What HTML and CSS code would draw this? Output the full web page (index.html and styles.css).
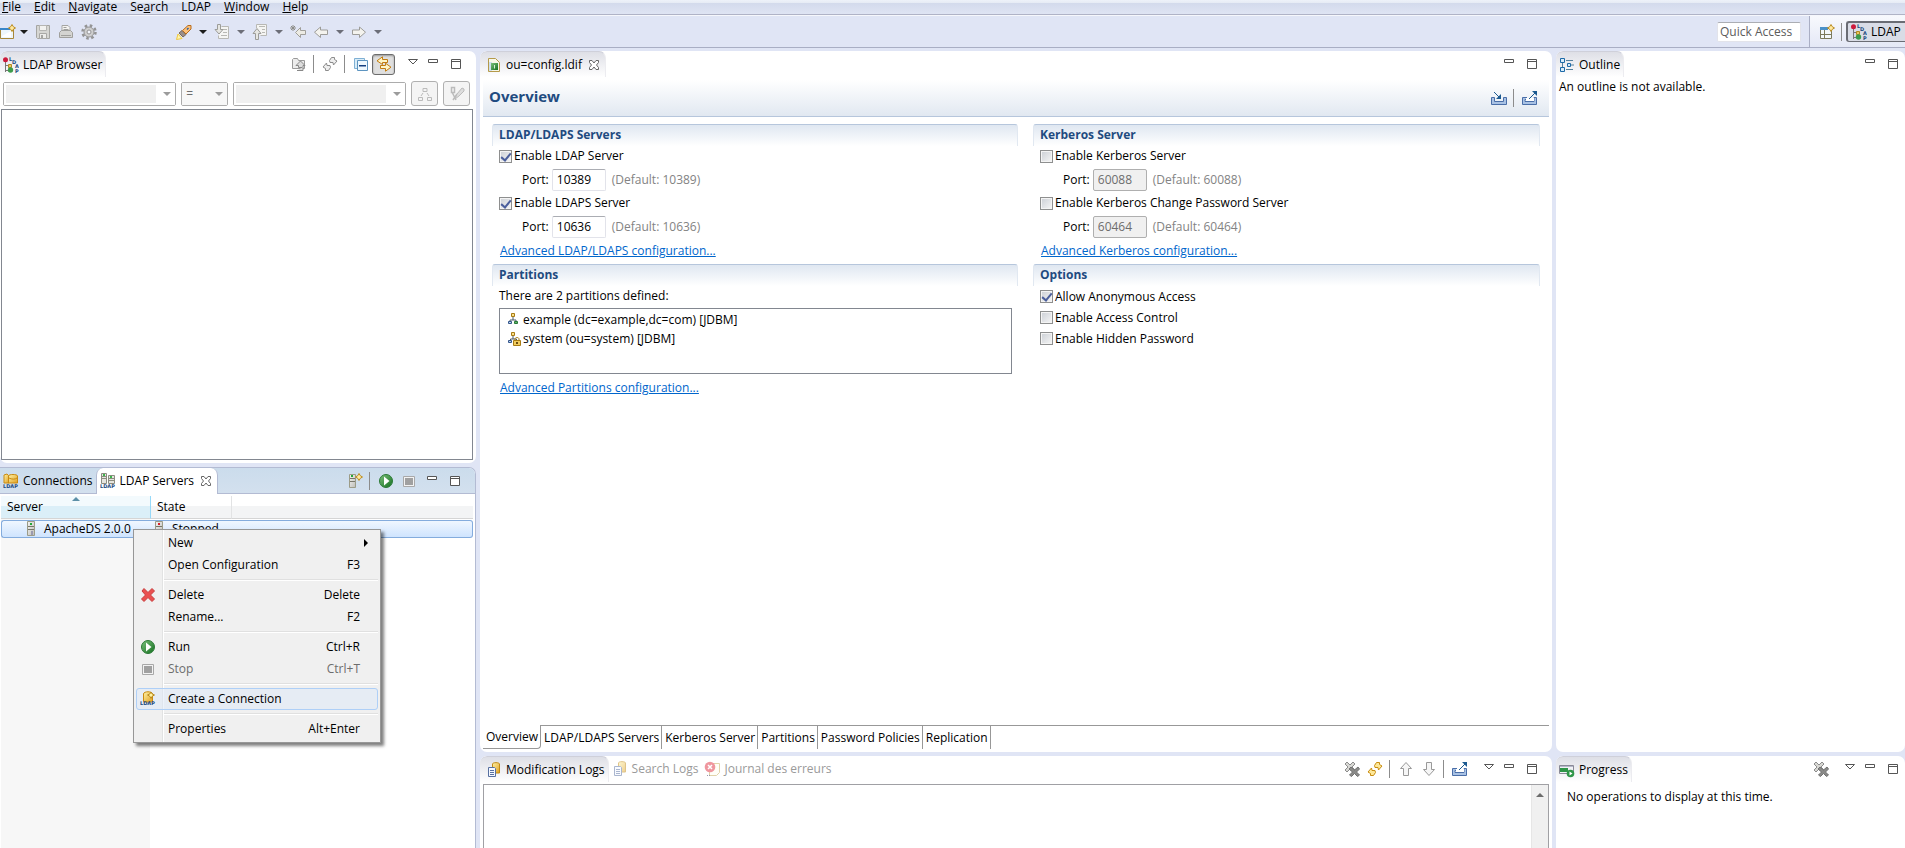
FILE: index.html
```html
<!DOCTYPE html>
<html lang="en">
<head>
  <meta charset="UTF-8">
  <meta name="viewport" content="width=device-width, initial-scale=1.0">
  <title>LDAP - ou=config.ldif</title>
  <link rel="stylesheet" href="styles.css">
</head>
<body>

  <!-- Shared icons -->
  <svg class="sprite" aria-hidden="true">
    <defs>
      <linearGradient id="gGold" x1="0" y1="0" x2="1" y2="1"><stop offset="0" stop-color="#fff3a8"/><stop offset="1" stop-color="#e0a020"/></linearGradient>
      <linearGradient id="gGreen" x1="0" y1="0" x2="1" y2="1"><stop offset="0" stop-color="#7cc07c"/><stop offset="1" stop-color="#14701f"/></linearGradient>
      <linearGradient id="gGrey" x1="0" y1="0" x2="1" y2="1"><stop offset="0" stop-color="#f4f4f2"/><stop offset="1" stop-color="#bdbdb8"/></linearGradient>
    </defs>
    <symbol id="i-new" viewBox="0 0 16 16">
      <path d="M.5 4.5h13v10H.5z" fill="#eef6fc" stroke="#a8873a"/>
      <path d="M0 4h10v2H0z" fill="#3a86c8"/>
      <path d="M2 12l9-5v6H2z" fill="#fff"/>
      <path d="M12 .5l1.3 2.2 2.2 1.3-2.2 1.3L12 7.5l-1.3-2.2L8.5 4l2.2-1.3z" fill="#ffe9a0" stroke="#b98a20"/>
    </symbol>
    <symbol id="i-save" viewBox="0 0 16 16">
      <path d="M1.5 1.5h13v13h-12l-1-1z" fill="#d6d6d3" stroke="#a5a5a2"/>
      <path d="M4.5 1.5h7v5h-7z" fill="#f2f2f0" stroke="#b5b5b2"/>
      <path d="M4.5 9.5h7v5h-7z" fill="#ececea" stroke="#a9a9a6"/><path d="M6 11h2v3H6z" fill="#a5a5a2"/>
    </symbol>
    <symbol id="i-print" viewBox="0 0 16 16">
      <path d="M4 1.5h6l2 2V8H4z" fill="#f4f4f2" stroke="#a5a5a2"/>
      <path d="M1.5 8.5l2-2h9l2 2v5h-13z" fill="#d4d4d1" stroke="#a0a09d"/>
      <path d="M3 11.5h10M5.5 3.5h3M5.5 5.5h5" stroke="#a0a09d"/>
    </symbol>
    <symbol id="i-gear" viewBox="0 0 16 16">
      <circle cx="8" cy="8" r="6.5" fill="none" stroke="#949494" stroke-width="2.5" stroke-dasharray="2.55 2.55"/>
      <circle cx="8" cy="8" r="5" fill="#cfcfcf" stroke="#949494"/>
      <circle cx="8" cy="8" r="2" fill="#f2f4fa" stroke="#949494"/>
    </symbol>
    <symbol id="i-torch" viewBox="0 0 16 16">
      <path d="M.5 15.5L2 10l4 4.500z" fill="#fff6b0" stroke="#f0c840"/>
      <path d="M3 9l3-2.500 4 4L7 13z" fill="#9a8e88" stroke="#77685e"/>
      <path d="M6.500 6.500L12 1.500l3 0v3.500L10 10z" fill="#fbc07a" stroke="#b86c1c"/>
      <path d="M11 5.500l1.500-1.500" stroke="#2a5fa8" stroke-width="1.500"/>
    </symbol>
    <symbol id="i-next" viewBox="0 0 16 16">
      <path d="M7.5 2.5h7v12h-10v-3" fill="#f5f5f3" stroke="#b8b8b4"/>
      <path d="M9 5.5h4M9 8.5h4M7 11.5h6" stroke="#b8b8b4"/>
      <path d="M3.5.5h3v5h2.5L5 10 1 5.5h2.5z" fill="#e6e6e2" stroke="#9c9c98"/>
    </symbol>
    <symbol id="i-prev" viewBox="0 0 16 16">
      <path d="M4.5 4V.5h10v11h-6" fill="#f5f5f3" stroke="#b8b8b4"/>
      <path d="M7 2.5h6M10 5.5h3M10 8.5h3" stroke="#b8b8b4"/>
      <path d="M3.5 15.5h3v-6H9L5 4.5l-4 5h2.5z" fill="#e6e6e2" stroke="#9c9c98"/>
    </symbol>
    <symbol id="i-lastedit" viewBox="0 0 16 16">
      <path d="M15.5 6.5v4h-5v3L5.500 8.5l5-5v3z" fill="#ecebe4" stroke="#a09f9a"/>
      <path d="M3 1v6M0 4h6M1 2l4 4M5 2L1 6" stroke="#8c8c88"/>
    </symbol>
    <symbol id="i-left" viewBox="0 0 16 16"><path d="M14.5 6v4.5H7.5v3L1.5 8.2l6-5.2v3z" fill="#f4f3ee" stroke="#9d9c98"/></symbol>
    <symbol id="i-right" viewBox="0 0 16 16"><path d="M1.5 6v4.5h7v3l6-5.3L8.5 3v3z" fill="#f4f3ee" stroke="#9d9c98"/></symbol>
    <symbol id="i-up" viewBox="0 0 16 16"><path d="M5.5 14.5v-7h-3L8 1.5l5.5 6h-3v7z" fill="#f6f6f6" stroke="#999"/></symbol>
    <symbol id="i-down" viewBox="0 0 16 16"><path d="M5.5 1.5v7h-3L8 14.5l5.5-6h-3v-7z" fill="#f6f6f6" stroke="#999"/></symbol>
    <symbol id="i-persp" viewBox="0 0 16 16">
      <path d="M1.5 4.5h11v10h-11z" fill="#f4f8fb" stroke="#7c7a5c"/>
      <path d="M1 3h8v3H1z" fill="#4a90c8"/><path d="M5.5 6v8M2 10.5h10" stroke="#7c7a5c"/>
      <path d="M12 .5l1.3 2.2 2.2 1.3-2.2 1.3L12 7.5l-1.3-2.2L8.5 4l2.2-1.3z" fill="#ffe9a0" stroke="#b98a20"/>
    </symbol>
    <symbol id="i-ldap" viewBox="0 0 16 16">
      <path d="M2.5 4v11M2.5 8.5h4M2.5 13.5h4" stroke="#777" fill="none"/>
      <circle cx="2.5" cy="2.8" r="2.5" fill="#cc1a3c"/>
      <path d="M5.5 7.5h3v3h-3z" fill="#e8c860" stroke="#b58a1c"/>
      <circle cx="7.5" cy="13" r="2.7" fill="#3d9c4c"/>
      <g class="tiny"><text x="6" y="4">L</text><text x="9" y="7">D</text><text x="12" y="11">A</text><text x="12" y="16">P</text></g>
    </symbol>
    <symbol id="i-folderup" viewBox="0 0 16 16">
      <path d="M1.5 3.5l1-1h4l1 2h6v8h-12z" fill="#ececec" stroke="#999"/>
      <path d="M6 14.5h6v-5h2L9.5 5 5 9.5h2.5v2H11" fill="#ddd" stroke="#888"/>
    </symbol>
    <symbol id="i-refresh" viewBox="0 0 16 16">
      <path d="M7.5 4.500l2-3h3v2l2.500 1.500-3.500 4-.500-2.500h-3z" fill="#eee" stroke="#8c8c8c"/>
      <path d="M8.500 11.500l-2 3h-3v-2L1 11l3.500-4 .500 2.500h3z" fill="#eee" stroke="#8c8c8c"/>
    </symbol>
    <symbol id="i-refreshgold" viewBox="0 0 16 16">
      <path d="M7.5 4.500l2-3h3v2l2.500 1.500-3.500 4-.500-2.500h-3z" fill="#fde89a" stroke="#c88c10"/>
      <path d="M8.500 11.500l-2 3h-3v-2L1 11l3.500-4 .500 2.500h3z" fill="#fde89a" stroke="#c88c10"/>
    </symbol>
    <symbol id="i-collapse" viewBox="0 0 16 16">
      <path d="M1.5 2.5h10v10h-10z" fill="#d8ecf8" stroke="#7fb0d4"/>
      <path d="M4.5 4.5h10v10h-10z" fill="#eef8fe" stroke="#5d94c0"/><path d="M6 9h7v1.500H6z" fill="#143f80"/>
    </symbol>
    <symbol id="i-link" viewBox="0 0 16 16">
      <path d="M11.500 3.500v3h-5v2L1 4.800 6.500.8v2.700z" fill="#fff6c8" stroke="#c27c10"/>
      <path d="M4.500 9.500v3h5v2.700l5.500-4-5.500-4v2.300z" fill="#fff6c8" stroke="#c27c10"/>
    </symbol>
    <symbol id="i-viewmenu" viewBox="0 0 16 16"><path d="M3.5 3.5h9L8 8z" fill="#fff" stroke="#555"/></symbol>
    <symbol id="i-min" viewBox="0 0 16 16"><path d="M3.5 3.5h9v3h-9z" fill="#fff" stroke="#555"/></symbol>
    <symbol id="i-max" viewBox="0 0 16 16"><path d="M3.5 3.5h9v9h-9zM3.5 5.5h9" fill="#fff" stroke="#555"/></symbol>
    <symbol id="i-close" viewBox="0 0 16 16"><path d="M3.5 3.5H6l2 2.5 2-2.5h2.5v2L10.5 8l2 2.5v2H10L8 10l-2 2.5H3.5v-2l2-2.5-2-2.5z" fill="#fff" stroke="#666"/></symbol>
    <symbol id="i-tree" viewBox="0 0 16 16"><path d="M6 2.5h4v3H6zM1.5 11.5h4v3h-4zM10.5 11.5h4v3h-4zM6 7L4 10M10 7l2 3" fill="none" stroke="#bbb"/></symbol>
    <symbol id="i-run-filter" viewBox="0 0 16 16">
      <path d="M2.5 1.5h3v5h-3zM3 6l4 8M8 8l-4 6" fill="none" stroke="#bbb" stroke-width="1.5"/>
      <path d="M6 13l2-5 5-6 2 1v2l-5 5z" fill="#ddd" stroke="#bbb"/>
    </symbol>
    <symbol id="i-ldif" viewBox="0 0 16 16">
      <path d="M2.5 1.5h7l4 4v9h-11z" fill="#f8f8e8" stroke="#b59a4a"/><path d="M3 5h3v9H3z" fill="#cfe0ee"/>
      <path d="M5 6h7v7H5z" fill="url(#gGreen)"/><path d="M8.5 11.5V8" stroke="#d8f0d8"/>
    </symbol>
    <symbol id="i-import" viewBox="0 0 16 16">
      <path d="M.5 7.5h3v4h9v-4h3v7H.5z" fill="#a9c2e4" stroke="#4a6ea8"/>
      <path d="M3 2l6 6" stroke="#1c5a90"/><path d="M10 4v5H5z" fill="#1c5a90"/>
    </symbol>
    <symbol id="i-export" viewBox="0 0 16 16">
      <path d="M5 7.5H.5v7h14v-7H12v4H3v-2h2" fill="#a9c2e4" stroke="#4a6ea8"/>
      <path d="M4 8h8v3H4z" fill="#fff"/>
      <path d="M7 9l6-6" stroke="#1c5a90"/><path d="M10 1h5v5z" fill="#1c5a90"/>
    </symbol>
    <symbol id="i-outline" viewBox="0 0 16 16">
      <path d="M1.5 1.5h4v4h-4zM1.5 10.5h4v4h-4zM8.500 6.5h3v3h-3z" fill="#d8ecfa" stroke="#1d6aa8"/>
      <path d="M7 3.500h7M12 8h3M7 12.5h7M3.500 6v4" stroke="#55809c" fill="none"/>
    </symbol>
    <symbol id="i-conns" viewBox="0 0 16 16">
      <path d="M1 2l3-1 2 2v7H1z" fill="url(#gGold)" stroke="#c98a10"/>
      <path d="M5.5 3c0-2 9-2 9 0v7h-9z" fill="url(#gGold)" stroke="#c98a10"/><path d="M6 5c3 1.500 6 1.500 8 0" fill="none" stroke="#c98a10"/>
      <g class="tiny"><text x="0" y="15">LDAP</text></g>
    </symbol>
    <symbol id="i-servers" viewBox="0 0 16 16">
      <path d="M1.5.5h5v10h-5zM8.500 2.5h6v8h-6z" fill="#e6e6e0" stroke="#8c8c80"/>
      <path d="M2 3.5h4M2 5.500h4M9 5.500h5M9 7.500h5" stroke="#8c8c80"/><path d="M3 1h2v2H3zM10 3h2v2h-2z" fill="#3db44c"/>
      <g class="tiny"><text x="0" y="15">LDAP</text></g>
    </symbol>
    <symbol id="i-server" viewBox="0 0 16 16">
      <path d="M4.5.5h7v14h-7z" fill="url(#gGrey)" stroke="#9c9c88"/>
      <path d="M5 5.5h6M5 8.5h6" stroke="#77776a"/><path d="M7 2h2v2H7z" fill="#22a83a"/><path d="M8 10h2v4H8z" fill="#9a9ab0"/>
    </symbol>
    <symbol id="i-serverstop" viewBox="0 0 16 16">
      <path d="M.5.5h7v14h-7z" fill="url(#gGrey)" stroke="#9c9c88"/>
      <path d="M1 5.500h6M1 8.500h6" stroke="#77776a"/><path d="M3 2h2v2H3z" fill="#d8202c"/>
      <path d="M6.500 8.500h6v6h-6z" fill="#e4ecf8" stroke="#4a6eb0"/>
    </symbol>
    <symbol id="i-newserver" viewBox="0 0 16 16">
      <path d="M2.500 1.500h6v13h-6z" fill="url(#gGrey)" stroke="#9c9c88"/>
      <path d="M3 5.500h5M3 8.500h5" stroke="#77776a"/><path d="M4 2h2v2H4z" fill="#22a83a"/>
      <path d="M12 .5l1.3 2.2 2.2 1.3-2.2 1.3L12 7.5l-1.3-2.2L8.500 4l2.200-1.300z" fill="#ffe9a0" stroke="#b98a20"/>
    </symbol>
    <symbol id="i-run" viewBox="0 0 16 16"><circle cx="8" cy="8" r="6.500" fill="url(#gGreen)" stroke="#2b7a36"/><path d="M6 3.500L11.500 8 6 12.500z" fill="#fff"/></symbol>
    <symbol id="i-stop" viewBox="0 0 16 16"><path d="M2.500 3.500h11v10h-11z" fill="#f2f2f2" stroke="#a8a8a8"/><path d="M4 5h8v7H4z" fill="#a0a0a0"/></symbol>
    <symbol id="i-delete" viewBox="0 0 16 16"><path d="M2 4l2-2.500 4 4 4-4L14.500 4l-4 4 4 4-2.500 2.500-4-4-4 4L1.500 12l4-4z" fill="#ea5050" stroke="#c83c3c"/></symbol>
    <symbol id="i-newconn" viewBox="0 0 16 16">
      <path d="M3.500 3c0-3 9-3 9 0v8h-9z" fill="url(#gGold)" stroke="#c98a10"/>
      <path d="M11 1l1.200 2 2.300 1-2.300 1.200L11 7.500 9.800 5.200 7.500 4l2.300-1z" fill="#fff2a0" stroke="#b98a20"/>
      <g class="tiny"><text x="0" y="14">LDAP</text></g>
    </symbol>
    <symbol id="i-part" viewBox="0 0 16 16">
      <path d="M8 5v3M5 10V8h6v2" fill="none" stroke="#4a5a6a"/>
      <path d="M6.500 1.500h3v3h-3z" fill="#fbe08a" stroke="#a87c14"/><path d="M3.500 9.500h3v2h-3z" fill="#bcd4ee" stroke="#34568c"/><path d="M9.500 9.500h3v2h-3z" fill="#5fb46a" stroke="#2a7a38"/>
    </symbol>
    <symbol id="i-partlock" viewBox="0 0 16 16">
      <path d="M8 5v3M5.500 10V8h6v2" fill="none" stroke="#4a5a6a"/>
      <path d="M6.500 1.500h3v3h-3z" fill="#fbe08a" stroke="#a87c14"/><path d="M3.500 9.500h3v2h-3z" fill="#bcd4ee" stroke="#34568c"/>
      <path d="M10 10V8c0-2 4-2 4 0v2" fill="none" stroke="#a87c14"/><path d="M8.500 9.500h7v5h-7z" fill="#f0cc60" stroke="#a87c14"/><path d="M11 11h2v2h-2z" fill="#6a4c10"/>
    </symbol>
    <symbol id="i-logs" viewBox="0 0 16 16">
      <path d="M6.500 2c0-1.800 7-1.800 7 0v9h-7z" fill="url(#gGold)" stroke="#c08a18"/>
      <path d="M2.500 5.500h6l1 1v8h-7z" fill="#f4f8ff" stroke="#5870a0"/><path d="M4 8.500h4M4 10.500h4M4 12.500h4" stroke="#5870a0"/>
    </symbol>
    <symbol id="i-errlog" viewBox="0 0 16 16">
      <path d="M5.500 2.500h10v9l-3 3h-7z" fill="#fffef0" stroke="#c4a858"/>
      <circle cx="6" cy="6" r="5.300" fill="#e03040"/><path d="M4 4l4 4M8 4L4 8" stroke="#fff" stroke-width="1.500"/><path d="M3 14.500h4" stroke="#335" stroke-dasharray="1 1"/>
    </symbol>
    <symbol id="i-clear" viewBox="0 0 16 16">
      <path d="M1 3l2-2 3 3 3-3 2 2-3 3 3 3-2 2-3-3-3 3-2-2 3-3z" fill="#d8d8d4" stroke="#8c8c8c"/>
      <path d="M5 8l2-2 3.500 3L14 6l1.500 2-3 3 3 3-2 1.500-3-3-3 3L5.500 14l3-3z" fill="#8a8a88" stroke="#707070"/>
    </symbol>
    <symbol id="i-progress" viewBox="0 0 16 16">
      <path d="M.5 3.500h14v8H.5z" fill="#f2f2f6" stroke="#8a8a98"/><path d="M1 6h8v4H1z" fill="#2f9648"/><path d="M1 4h13v1H1z" fill="#b4b8c8"/>
      <circle cx="11.500" cy="11.500" r="3.800" fill="#2f9648"/><path d="M10.500 9.500l3 2-3 2z" fill="#fff"/>
    </symbol>
  </svg>

  <nav class="menubar">
    <a href="#"><u>F</u>ile</a>
    <a href="#"><u>E</u>dit</a>
    <a href="#"><u>N</u>avigate</a>
    <a href="#">Se<u>a</u>rch</a>
    <a href="#">LDAP</a>
    <a href="#"><u>W</u>indow</a>
    <a href="#"><u>H</u>elp</a>
  </nav>

  <header class="coolbar">
    <div class="group">
      <button class="cb"><svg><use href="#i-new"/></svg></button>
      <button class="drop dark"></button>
      <button class="cb"><svg><use href="#i-save"/></svg></button>
      <button class="cb"><svg><use href="#i-print"/></svg></button>
      <button class="cb"><svg><use href="#i-gear"/></svg></button>
    </div>
    <div class="group nav">
      <button class="cb"><svg><use href="#i-torch"/></svg></button>
      <button class="drop dark"></button>
      <button class="cb"><svg><use href="#i-next"/></svg></button>
      <button class="drop"></button>
      <button class="cb"><svg><use href="#i-prev"/></svg></button>
      <button class="drop"></button>
      <button class="cb"><svg><use href="#i-lastedit"/></svg></button>
      <button class="cb"><svg><use href="#i-left"/></svg></button>
      <button class="drop"></button>
      <button class="cb"><svg><use href="#i-right"/></svg></button>
      <button class="drop"></button>
    </div>
    <input class="quick" type="text" placeholder="Quick Access" aria-label="Quick Access">
    <div class="perspectives">
      <button class="cb"><svg><use href="#i-persp"/></svg></button>
      <i class="sep"></i>
      <button class="persp"><svg><use href="#i-ldap"/></svg>LDAP</button>
    </div>
  </header>

  <main class="workbench">

    <div class="column left">
      <section class="part browser">
        <div class="tabrow">
          <button class="tab active"><svg><use href="#i-ldap"/></svg>LDAP Browser</button>
          <div class="tools">
            <button class="tool"><svg><use href="#i-folderup"/></svg></button>
            <i class="sep"></i>
            <button class="tool"><svg><use href="#i-refresh"/></svg></button>
            <i class="sep"></i>
            <button class="tool"><svg><use href="#i-collapse"/></svg></button>
            <button class="tool on"><svg><use href="#i-link"/></svg></button>
            <button class="tool view"><svg><use href="#i-viewmenu"/></svg></button>
            <button class="tool"><svg><use href="#i-min"/></svg></button>
            <button class="tool"><svg><use href="#i-max"/></svg></button>
          </div>
        </div>
        <div class="quicksearch">
          <span class="combo"><select disabled aria-label="Attribute"><option></option></select></span>
          <span class="combo op"><select disabled aria-label="Operator"><option>=</option></select></span>
          <span class="combo"><select disabled aria-label="Value"><option></option></select></span>
          <button class="qs" disabled><svg><use href="#i-tree"/></svg></button>
          <button class="qs" disabled><svg><use href="#i-run-filter"/></svg></button>
        </div>
        <div class="tree"></div>
      </section>

      <section class="part servers">
        <div class="tabrow focus">
          <button class="tab"><svg><use href="#i-conns"/></svg>Connections</button>
          <button class="tab active"><svg><use href="#i-servers"/></svg>LDAP Servers<svg class="close"><use href="#i-close"/></svg></button>
          <div class="tools">
            <button class="tool"><svg><use href="#i-newserver"/></svg></button>
            <i class="sep"></i>
            <button class="tool"><svg><use href="#i-run"/></svg></button>
            <button class="tool"><svg><use href="#i-stop"/></svg></button>
            <button class="tool"><svg><use href="#i-min"/></svg></button>
            <button class="tool"><svg><use href="#i-max"/></svg></button>
          </div>
        </div>
        <div class="tablewrap">
          <table>
            <thead>
              <tr><th class="sorted">Server</th><th class="state">State</th><th></th></tr>
            </thead>
            <tbody>
              <tr class="selected">
                <td><span class="cell name"><svg><use href="#i-server"/></svg>ApacheDS 2.0.0</span></td>
                <td><span class="cell"><svg><use href="#i-serverstop"/></svg>Stopped</span></td>
                <td></td>
              </tr>
            </tbody>
          </table>
        </div>
      </section>
    </div>

    <div class="column center">
      <section class="part editor">
        <div class="tabrow">
          <button class="tab active"><svg><use href="#i-ldif"/></svg>ou=config.ldif<svg class="close"><use href="#i-close"/></svg></button>
          <div class="tools">
            <button class="tool"><svg><use href="#i-min"/></svg></button>
            <button class="tool"><svg><use href="#i-max"/></svg></button>
          </div>
        </div>
        <div class="formhead">
          <h1>Overview</h1>
          <button class="tool"><svg><use href="#i-import"/></svg></button>
          <i class="sep"></i>
          <button class="tool"><svg><use href="#i-export"/></svg></button>
        </div>
        <div class="form">
          <section class="block">
            <h2>LDAP/LDAPS Servers</h2>
            <label class="check"><input type="checkbox" checked>Enable LDAP Server</label>
            <div class="port"><label for="ldapPort">Port:</label><input type="text" id="ldapPort" value="10389"><span>(Default: 10389)</span></div>
            <label class="check"><input type="checkbox" checked>Enable LDAPS Server</label>
            <div class="port"><label for="ldapsPort">Port:</label><input type="text" id="ldapsPort" value="10636"><span>(Default: 10636)</span></div>
            <a class="adv" href="#">Advanced LDAP/LDAPS configuration...</a>
          </section>
          <section class="block">
            <h2>Kerberos Server</h2>
            <label class="check"><input type="checkbox">Enable Kerberos Server</label>
            <div class="port"><label for="krbPort">Port:</label><input type="text" id="krbPort" value="60088" disabled><span>(Default: 60088)</span></div>
            <label class="check"><input type="checkbox">Enable Kerberos Change Password Server</label>
            <div class="port"><label for="chpwPort">Port:</label><input type="text" id="chpwPort" value="60464" disabled><span>(Default: 60464)</span></div>
            <a class="adv" href="#">Advanced Kerberos configuration...</a>
          </section>
          <section class="block">
            <h2>Partitions</h2>
            <p>There are 2 partitions defined:</p>
            <ul class="list">
              <li><svg><use href="#i-part"/></svg>example (dc=example,dc=com) [JDBM]</li>
              <li><svg><use href="#i-partlock"/></svg>system (ou=system) [JDBM]</li>
            </ul>
            <a class="adv" href="#">Advanced Partitions configuration...</a>
          </section>
          <section class="block options">
            <h2>Options</h2>
            <label class="check"><input type="checkbox" checked>Allow Anonymous Access</label>
            <label class="check"><input type="checkbox">Enable Access Control</label>
            <label class="check"><input type="checkbox">Enable Hidden Password</label>
          </section>
        </div>
        <div class="pagetabs">
          <button class="current">Overview</button>
          <button>LDAP/LDAPS Servers</button>
          <button>Kerberos Server</button>
          <button>Partitions</button>
          <button>Password Policies</button>
          <button>Replication</button>
        </div>
      </section>

      <section class="part logs">
        <div class="tabrow">
          <button class="tab active"><svg><use href="#i-logs"/></svg>Modification Logs</button>
          <button class="tab idle"><svg><use href="#i-logs"/></svg>Search Logs</button>
          <button class="tab idle"><svg><use href="#i-errlog"/></svg>Journal des erreurs</button>
          <div class="tools">
            <button class="tool"><svg><use href="#i-clear"/></svg></button>
            <button class="tool"><svg><use href="#i-refreshgold"/></svg></button>
            <i class="sep"></i>
            <button class="tool"><svg><use href="#i-up"/></svg></button>
            <button class="tool"><svg><use href="#i-down"/></svg></button>
            <i class="sep"></i>
            <button class="tool"><svg><use href="#i-export"/></svg></button>
            <button class="tool view"><svg><use href="#i-viewmenu"/></svg></button>
            <button class="tool"><svg><use href="#i-min"/></svg></button>
            <button class="tool"><svg><use href="#i-max"/></svg></button>
          </div>
        </div>
        <div class="logbox">
          <textarea readonly aria-label="Modification Logs"></textarea>
          <div class="scroll"></div>
        </div>
      </section>
    </div>

    <div class="column right">
      <section class="part outline">
        <div class="tabrow">
          <button class="tab active"><svg><use href="#i-outline"/></svg>Outline</button>
          <div class="tools">
            <button class="tool"><svg><use href="#i-min"/></svg></button>
            <button class="tool"><svg><use href="#i-max"/></svg></button>
          </div>
        </div>
        <p>An outline is not available.</p>
      </section>
      <section class="part progress">
        <div class="tabrow">
          <button class="tab active"><svg><use href="#i-progress"/></svg>Progress</button>
          <div class="tools">
            <button class="tool"><svg><use href="#i-clear"/></svg></button>
            <button class="tool view"><svg><use href="#i-viewmenu"/></svg></button>
            <button class="tool"><svg><use href="#i-min"/></svg></button>
            <button class="tool"><svg><use href="#i-max"/></svg></button>
          </div>
        </div>
        <p>No operations to display at this time.</p>
      </section>
    </div>
  </main>

  <!-- Context menu of the selected server -->
  <div class="popup">
    <button><i></i><span>New</span><b class="arrow"></b></button>
    <button><i></i><span>Open Configuration</span><kbd>F3</kbd></button>
    <hr>
    <button><i><svg><use href="#i-delete"/></svg></i><span>Delete</span><kbd>Delete</kbd></button>
    <button><i></i><span>Rename...</span><kbd>F2</kbd></button>
    <hr>
    <button><i><svg><use href="#i-run"/></svg></i><span>Run</span><kbd>Ctrl+R</kbd></button>
    <button disabled><i><svg><use href="#i-stop"/></svg></i><span>Stop</span><kbd>Ctrl+T</kbd></button>
    <hr>
    <button class="hot"><i><svg><use href="#i-newconn"/></svg></i><span>Create a Connection</span></button>
    <hr>
    <button><i></i><span>Properties</span><kbd>Alt+Enter</kbd></button>
  </div>

</body>
</html>
```
FILE: styles.css
```css
* {
  box-sizing: border-box;
}
body {
  margin: 0;
  height: 100vh;
  display: flex;
  flex-direction: column;
  overflow: hidden;
  position: relative;
  background: #e0e5f5;
  color: #000;
  font: 12px/16px "Open Sans", "Noto Sans", sans-serif;
}
button, input, select, textarea, kbd {
  font: inherit;
  color: inherit;
}
button {
  background: none;
  border: 0;
  padding: 0;
  white-space: nowrap;
}
svg {
  width: 16px;
  height: 16px;
  flex: none;
  display: block;
}
.sprite {
  position: absolute;
  width: 0;
  height: 0;
}
.tiny {
  font: bold 5px "DejaVu Sans", sans-serif;
  fill: #1a4a80;
}
p, h1, h2, ul {
  margin: 0;
  padding: 0;
}

/* Menu bar */
.menubar {
  height: 15px;
  flex: none;
  display: flex;
  align-items: center;
  gap: 13px;
  padding: 0 2px 1px;
  background: linear-gradient(#eef2f9 0, #e6ebf5 3px, #d3daec 3px, #dfe4f3 14px);
  border-bottom: 1px solid #b0b3c6;
}
.menubar a {
  color: #000;
  text-decoration: none;
}

/* Main toolbar */
.coolbar {
  height: 33px;
  flex: none;
  display: flex;
  align-items: center;
  border-top: 1px solid #f6f7fc;
  border-bottom: 1px solid #a9aec4;
}
.group {
  display: flex;
  align-items: center;
}
.nav {
  margin-left: 72px;
}
.cb {
  width: 23px;
  display: flex;
  justify-content: center;
}
.group:first-child .cb:first-child {
  width: 16px;
}
.drop {
  width: 15px;
  height: 16px;
  display: flex;
  align-items: center;
  justify-content: center;
}
.drop::before {
  content: "";
  border: 4px solid transparent;
  border-top-color: #6c6e78;
  border-bottom: 0;
}
.dark::before {
  border-top-color: #1c1c1c;
}
.quick {
  width: 84px;
  height: 20px;
  margin-left: auto;
  margin-right: 8px;
  padding: 0 2px;
  border: 1px solid #e2e3ea;
  border-top-color: #abadb3;
  border-radius: 2px;
  background: #fff;
}
.quick::placeholder {
  color: #5c5c5c;
  opacity: 1;
}
.perspectives {
  width: 96px;
  align-self: stretch;
  display: flex;
  align-items: center;
  justify-content: space-between;
  padding-left: 5px;
  border-left: 1px solid #a9aec4;
  background: linear-gradient(#f8f9fd, #e4e8f6);
}
.persp {
  width: 59px;
  height: 21px;
  display: flex;
  align-items: center;
  gap: 4px;
  padding-left: 3px;
  border: 2px solid #6a6c74;
  border-right: 0;
  border-bottom-width: 1px;
  border-radius: 3px 0 0 3px;
  background: #d9dce6;
}
.sep {
  width: 1px;
  height: 18px;
  margin: 0 4px 0 3px;
  background: #8c8c8c;
}

/* Workbench columns */
.workbench {
  flex: 1;
  min-height: 0;
  display: flex;
  gap: 4px;
  padding-top: 3px;
}
.column {
  display: flex;
  flex-direction: column;
  gap: 4px;
  min-width: 0;
}
.left {
  flex: 476 1 0;
}
.center {
  flex: 1072 1 0;
}
.right {
  flex: 349 1 0;
}
.part {
  min-height: 0;
  display: flex;
  flex-direction: column;
  background: #fff;
  border-radius: 7px;
  overflow: hidden;
}
.browser {
  flex: 413 1 0;
}
.servers {
  flex: 380 1 0;
  border: 1px solid #b3bbd3;
  border-width: 1px 1px 0 0;
  border-radius: 0 7px 0 0;
}
.editor, .outline {
  flex: 701 1 0;
}
.logs, .progress {
  flex: 92 1 0;
  border-radius: 7px 7px 0 0;
}

/* View tabs */
.tabrow {
  height: 26px;
  flex: none;
  display: flex;
}
.tab {
  display: flex;
  align-items: center;
  gap: 4px;
  padding: 0 3px;
}
.tab.active {
  border-top: 1px solid #cfd0da;
  border-right: 1px solid #ececf0;
  border-radius: 7px 7px 0 0;
  background: linear-gradient(#dedfe6, #fff);
}
.tab.idle {
  color: #9a9a9a;
}
.tab.idle svg {
  opacity: 0.5;
}
.editor .tab, .logs .active {
  padding-left: 6px;
}
.focus {
  background: linear-gradient(#cbdcec, #d3e0ee);
  border-bottom: 1px solid #b3bbd3;
}
.focus .tab.active {
  margin-bottom: -1px;
  border: 1px solid #b3bbd3;
  border-width: 0 1px;
  background: #fff;
}
.tools {
  margin-left: auto;
  padding-right: 9px;
  display: flex;
  align-items: center;
}
.right .tools {
  padding-right: 1px;
}
.tool {
  width: 23px;
  height: 21px;
  display: flex;
  align-items: center;
  justify-content: center;
}
.tool.view {
  width: 17px;
  margin-left: 9px;
}
.tool.on {
  border: 1px solid #6c6c6c;
  border-radius: 3px;
  background: #dfdfdf;
  box-shadow: inset 0 1px 2px #999;
}

/* LDAP Browser */
.quicksearch {
  display: flex;
  align-items: center;
  gap: 5px;
  padding: 4px 6px 3px 3px;
}
.combo {
  height: 24px;
  flex: 174 1 0;
  position: relative;
  border: 1px solid #acacac;
  border-radius: 2px;
}
.combo.op {
  flex-grow: 45;
}
.combo::after {
  content: "";
  position: absolute;
  right: 4px;
  top: 9px;
  border: 4px solid transparent;
  border-top-color: #9c9c9c;
  border-bottom: 0;
}
.combo select {
  width: 100%;
  height: 100%;
  padding: 0 4px;
  border: 2px solid #fff;
  border-right-width: 19px;
  background: #f0f0f0;
  color: #6d6d6d;
  appearance: none;
  opacity: 1;
}
.op select {
  border-color: #f7f7f7;
  background: #f7f7f7;
  padding: 0 2px;
}
.qs {
  width: 27px;
  height: 25px;
  flex: none;
  display: flex;
  align-items: center;
  justify-content: center;
  border: 1px solid #b0b0b0;
  border-radius: 3px;
  background: #f4f4f4;
}
.tree {
  flex: 1;
  margin: 0 3px 3px 1px;
  border: 1px solid #828790;
}

/* LDAP Servers */
.tablewrap {
  flex: 1;
  margin: 2px 2px 0 1px;
  background: linear-gradient(to right, #f7f7f7 149px, #fff 149px);
}
table {
  width: 100%;
  table-layout: fixed;
  border-collapse: separate;
  border-spacing: 0;
}
th {
  height: 23px;
  padding: 0 6px;
  text-align: left;
  font-weight: normal;
  background: linear-gradient(#fff 45%, #f3f4f5 45%);
  border-right: 1px solid #e2e3e4;
  border-bottom: 1px solid #d5d5d5;
}
th:last-child {
  border-right: 0;
}
.sorted {
  width: 150px;
  position: relative;
  background: linear-gradient(#f3fafd 45%, #dbeff8 45%);
  border-right-color: #96d9f9;
}
.sorted::before {
  content: "";
  position: absolute;
  left: 71px;
  top: 1px;
  border: 4px solid transparent;
  border-bottom-color: #5c90a8;
  border-top: 0;
}
.state {
  width: 81px;
}
tbody::before {
  content: "";
  display: block;
  height: 1px;
}
td {
  height: 18px;
  padding: 0 4px;
  border: 1px solid #84acdd;
  border-width: 1px 0;
  background: linear-gradient(#f0f7ff, #cfe4fe);
}
td:first-child {
  border-left-width: 1px;
  border-radius: 3px 0 0 3px;
}
td:last-child {
  border-right-width: 1px;
  border-radius: 0 3px 3px 0;
}
.cell {
  height: 16px;
  display: flex;
  align-items: center;
  gap: 1px;
}
.name {
  gap: 5px;
  padding-left: 17px;
}

/* Editor */
.formhead {
  height: 37px;
  flex: none;
  display: flex;
  align-items: center;
  margin: 3px 3px 0;
  padding: 0 8px 0 6px;
  border-bottom: 1px solid #b6c6dc;
  background: linear-gradient(#fff, #e1e8f1);
}
.formhead h1 {
  margin-right: auto;
  padding-bottom: 4px;
  font-size: 15px;
  line-height: 20px;
  color: #1f4b80;
}
.form {
  display: grid;
  grid-template-columns: 526fr 507fr;
  column-gap: 15px;
  align-content: start;
  flex: 1;
  min-height: 0;
  padding: 7px 12px 0;
}
.block h2 {
  height: 22px;
  padding: 0 6px;
  font-size: 12px;
  line-height: 20px;
  color: #1f4b80;
  border: 1px solid #b6c6dc;
  border-color: #b6c6dc #e1e8f1 transparent;
  border-bottom: 0;
  border-radius: 3px 3px 0 0;
  background: linear-gradient(#dfe7f1, #fff);
}
.check {
  height: 20px;
  display: flex;
  align-items: center;
  gap: 2px;
  padding-left: 7px;
}
.options .check {
  height: 21px;
}
.check input {
  width: 13px;
  height: 13px;
  margin: 0;
  appearance: none;
  display: flex;
  justify-content: center;
  border: 1px solid #8e8f8f;
  background: linear-gradient(135deg, #cbcfd5, #f6f6f6);
  box-shadow: inset 0 0 0 1px #f4f4f4;
}
.check input:checked::before {
  content: "";
  width: 4px;
  height: 8px;
  border: solid #4b5f9c;
  border-width: 0 2px 2px 0;
  transform: rotate(40deg);
}
.port {
  height: 27px;
  display: flex;
  align-items: center;
  padding-left: 30px;
}
.port input {
  width: 54px;
  height: 22px;
  margin: 0 6px 0 3px;
  padding: 0 4px;
  border: 1px solid #e2e3ea;
  border-top-color: #abadb3;
  border-radius: 2px;
  background: #fff;
}
.port input:disabled {
  border-color: #afafaf;
  background: #f0f0f0;
  color: #6d6d6d;
}
.port span {
  color: #838383;
}
.adv {
  display: block;
  width: fit-content;
  margin: 0 0 2px 8px;
  line-height: 22px;
  color: #0066cc;
}
.block p {
  padding-left: 7px;
  line-height: 20px;
}
.list {
  height: 66px;
  margin: 2px 6px 3px 7px;
  padding: 1px 5px;
  list-style: none;
  border: 1px solid #828790;
}
.list li {
  height: 19px;
  display: flex;
  align-items: center;
  gap: 2px;
}
.pagetabs {
  display: flex;
  height: 24px;
  flex: none;
  margin: 0 3px 3px;
}
.pagetabs::after {
  content: "";
  flex: 1;
  border-top: 1px solid #989898;
}
.pagetabs button {
  padding: 0 2px 0 3px;
  border: 1px solid #989898;
  border-width: 1px 1px 0 0;
}
.pagetabs .current {
  border-width: 0 1px 1px 0;
  border-radius: 0 0 4px 0;
}

/* Bottom views */
.logbox {
  flex: 1;
  display: flex;
  margin: 2px 3px 0;
  border: 1px solid #a0a0a4;
  border-bottom: 0;
}
.logbox textarea {
  flex: 1;
  border: 0;
  resize: none;
  outline: 0;
}
.scroll {
  width: 17px;
  background: #f0f0f0;
  border-left: 1px solid #e6e6e6;
}
.scroll::before {
  content: "";
  display: block;
  width: 0;
  margin: 8px auto 0;
  border: 4px solid transparent;
  border-bottom-color: #6c6c6c;
  border-top: 0;
}
.outline p {
  padding: 2px 3px;
}
.progress p {
  padding: 7px 11px;
}

/* Context menu */
.popup {
  position: absolute;
  left: 133px;
  top: 529px;
  width: 248px;
  padding: 2px;
  border: 1px solid #979797;
  background: linear-gradient(to right, #f0f0f0 28px, #e2e3e3 28px, #e2e3e3 29px, #fff 29px, #fff 30px, #f0f0f0 30px);
  box-shadow: 3px 3px 3px rgba(0, 0, 0, 0.5);
}
.popup button {
  width: 100%;
  height: 22px;
  display: flex;
  align-items: center;
  padding: 0 17px 0 3px;
  border: 1px solid transparent;
  border-radius: 3px;
}
.popup i {
  width: 28px;
}
.popup span {
  margin-right: auto;
}
.popup button:disabled {
  color: #6d6d6d;
}
.popup .hot {
  border-color: #aecff7;
  background: rgba(220, 232, 248, 0.5);
}
.popup hr {
  height: 2px;
  margin: 3px 0 3px 28px;
  border: 0;
  border-top: 1px solid #e0e0e0;
  background: #fff;
}
.arrow {
  margin-right: -8px;
  border: 4px solid transparent;
  border-left-color: #000;
  border-right: 0;
}
```
